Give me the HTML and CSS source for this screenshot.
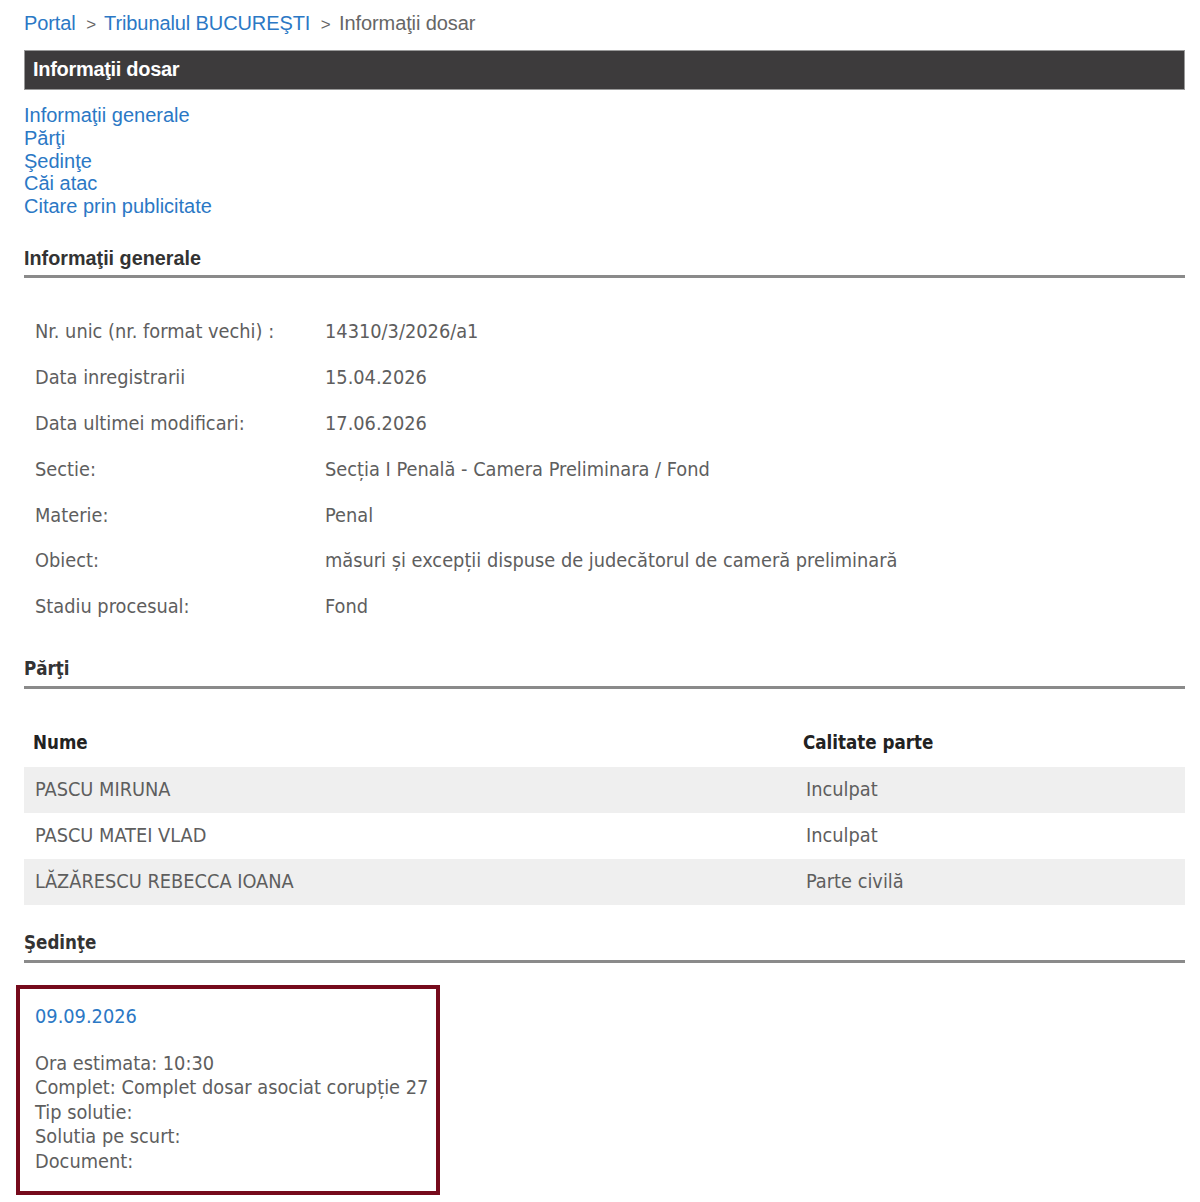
FILE: index.html
```html
<!DOCTYPE html>
<html lang="ro">
<head>
  <meta charset="UTF-8" />
  <title>Informaţii dosar</title>
  <link rel="stylesheet" href="styles.css">
</head>
<body>
  <div class="container">
    <div class="breadcrumb">
      <a href="#">Portal</a>
      <span class="sep">&gt;</span>
      <a href="#">Tribunalul BUCUREŞTI</a>
      <span class="sep">&gt;</span>
      <span class="current">Informaţii dosar</span>
    </div>

    <div class="titlebar">Informaţii dosar</div>

    <ul class="toc">
      <li><a href="#">Informaţii generale</a></li>
      <li><a href="#">Părţi</a></li>
      <li><a href="#">Şedinţe</a></li>
      <li><a href="#">Căi atac</a></li>
      <li><a href="#">Citare prin publicitate</a></li>
    </ul>

    <h2 class="section arial">Informaţii generale</h2>
    <table class="info">
      <tr><td class="label">Nr. unic (nr. format vechi) :</td><td>14310/3/2026/a1</td></tr>
      <tr><td class="label">Data inregistrarii</td><td>15.04.2026</td></tr>
      <tr><td class="label">Data ultimei modificari:</td><td>17.06.2026</td></tr>
      <tr><td class="label">Sectie:</td><td>Secția I Penală - Camera Preliminara / Fond</td></tr>
      <tr><td class="label">Materie:</td><td>Penal</td></tr>
      <tr><td class="label">Obiect:</td><td>măsuri și excepții dispuse de judecătorul de cameră preliminară</td></tr>
      <tr><td class="label">Stadiu procesual:</td><td>Fond</td></tr>
    </table>

    <h2 class="section">Părţi</h2>
    <table class="parti">
      <thead>
        <tr><th class="name">Nume</th><th>Calitate parte</th></tr>
      </thead>
      <tbody>
        <tr><td>PASCU MIRUNA</td><td>Inculpat</td></tr>
        <tr><td>PASCU MATEI VLAD</td><td>Inculpat</td></tr>
        <tr><td>LĂZĂRESCU REBECCA IOANA</td><td>Parte civilă</td></tr>
      </tbody>
    </table>

    <h2 class="section">Şedinţe</h2>
    <div class="hearing">
      <div class="date">09.09.2026</div>
      <div class="details">
        Ora estimata: 10:30<br>
        Complet: Complet dosar asociat corupție 27<br>
        Tip solutie:<br>
        Solutia pe scurt:<br>
        Document:
      </div>
    </div>
  </div>
</body>
</html>
```

FILE: styles.css
```css
body {
  margin: 0;
  background: #fff;
  font-family: 'Liberation Sans', Arial, sans-serif;
}
.container {
  width: 1161px;
  padding-left: 24px;
}
a {
  color: #2b78c5;
  text-decoration: none;
}
.breadcrumb {
  font-size: 20px;
  line-height: 24px;
  padding-top: 11px;
  color: #666;
  letter-spacing: -0.1px;
}
.breadcrumb .sep {
  font-size: 17px;
  margin: 0 3px 0 5px;
}
.titlebar {
  margin-top: 13px;
  height: 38px;
  line-height: 37px;
  background: #3d3b3c;
  border: 1px solid #999;
  color: #fff;
  font-weight: bold;
  font-size: 20px;
  padding-left: 8px;
  letter-spacing: -0.3px;
}
.toc {
  list-style: none;
  margin: 14px 0 0;
  padding: 0;
  font-size: 20px;
  line-height: 22.8px;
}
.section {
  margin: 0;
  font-family: 'DejaVu Sans Condensed', 'DejaVu Sans', sans-serif;
  font-weight: bold;
  font-size: 18.6px;
  line-height: 24px;
  color: #333;
  border-bottom: 3px solid #8a8a8a;
  padding-bottom: 5px;
}
.section.arial {
  margin-top: 28px;
  font-family: 'Liberation Sans', Arial, sans-serif;
  font-size: 19.8px;
}
table {
  border-collapse: collapse;
  width: 100%;
  font-family: 'DejaVu Sans Condensed', 'DejaVu Sans', sans-serif;
  font-size: 19.8px;
  color: #5e5e5e;
}
.info {
  margin: 31px 0 27px;
}
.info td {
  height: 45.8px;
  padding: 0;
  vertical-align: middle;
}
.info td.label {
  width: 290px;
  padding-left: 11px;
}
.parti {
  margin: 30px 0 26px;
}
.parti th {
  text-align: left;
  color: #222;
  font-weight: bold;
  font-size: 18.6px;
  height: 48px;
  padding: 0;
}
.parti th.name {
  width: 770px;
  padding-left: 9px;
}
.parti td {
  height: 46px;
  padding: 0;
}
.parti td:first-child {
  padding-left: 11px;
}
.parti td:last-child {
  padding-left: 3px;
}
.parti tbody tr:nth-child(odd) {
  background: #efefef;
}
.hearing {
  margin: 22px 0 0 -8px;
  width: 395px;
  border: 4px solid #760a1c;
  padding: 16px 6px 17px 15px;
  font-family: 'DejaVu Sans Condensed', 'DejaVu Sans', sans-serif;
  font-size: 19.8px;
  color: #5e5e5e;
  white-space: nowrap;
}
.hearing .date {
  color: #2b78c5;
  line-height: 24px;
  margin-bottom: 23px;
}
.hearing .details {
  line-height: 24.5px;
}
```
